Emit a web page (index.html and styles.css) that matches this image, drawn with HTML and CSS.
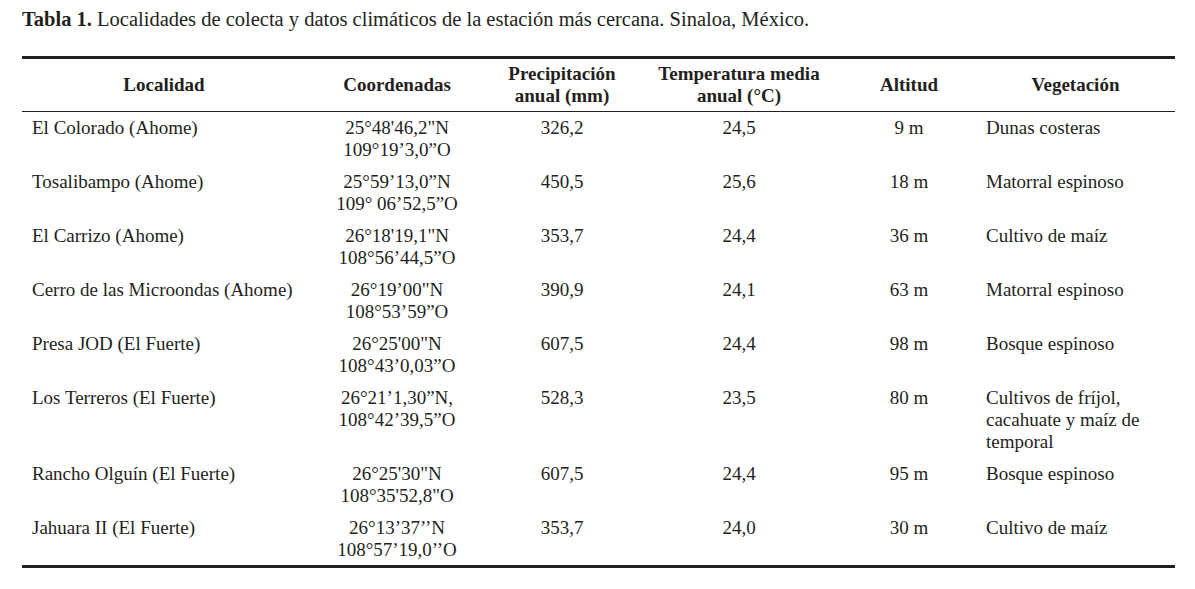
FILE: index.html
```html
<!DOCTYPE html>
<html lang="es">
<head>
<meta charset="utf-8">
<title>Tabla 1</title>
<link rel="stylesheet" href="styles.css">
</head>
<body>
<main class="page">
  <p class="caption"><b>Tabla 1.</b> Localidades de colecta y datos climáticos de la estación más cercana. Sinaloa, México.</p>
  <table class="data">
    <colgroup>
      <col class="c1"><col class="c2"><col class="c3"><col class="c4"><col class="c5"><col class="c6">
    </colgroup>
    <thead>
      <tr>
        <th>Localidad</th>
        <th>Coordenadas</th>
        <th>Precipitación<br>anual (mm)</th>
        <th>Temperatura media<br>anual (°C)</th>
        <th>Altitud</th>
        <th>Vegetación</th>
      </tr>
    </thead>
    <tbody>
      <tr>
        <td class="left">El Colorado (Ahome)</td>
        <td>25°48'46,2"N<br>109°19’3,0”O</td>
        <td>326,2</td>
        <td>24,5</td>
        <td>9 m</td>
        <td class="left">Dunas costeras</td>
      </tr>
      <tr>
        <td class="left">Tosalibampo (Ahome)</td>
        <td>25°59’13,0”N<br>109° 06’52,5”O</td>
        <td>450,5</td>
        <td>25,6</td>
        <td>18 m</td>
        <td class="left">Matorral espinoso</td>
      </tr>
      <tr>
        <td class="left">El Carrizo (Ahome)</td>
        <td>26°18'19,1"N<br>108°56’44,5”O</td>
        <td>353,7</td>
        <td>24,4</td>
        <td>36 m</td>
        <td class="left">Cultivo de maíz</td>
      </tr>
      <tr>
        <td class="left">Cerro de las Microondas (Ahome)</td>
        <td>26°19’00"N<br>108°53’59”O</td>
        <td>390,9</td>
        <td>24,1</td>
        <td>63 m</td>
        <td class="left">Matorral espinoso</td>
      </tr>
      <tr>
        <td class="left">Presa JOD (El Fuerte)</td>
        <td>26°25'00"N<br>108°43’0,03”O</td>
        <td>607,5</td>
        <td>24,4</td>
        <td>98 m</td>
        <td class="left">Bosque espinoso</td>
      </tr>
      <tr>
        <td class="left">Los Terreros (El Fuerte)</td>
        <td>26°21’1,30”N,<br>108°42’39,5”O</td>
        <td>528,3</td>
        <td>23,5</td>
        <td>80 m</td>
        <td class="left">Cultivos de fríjol,<br>cacahuate y maíz de<br>temporal</td>
      </tr>
      <tr>
        <td class="left">Rancho Olguín (El Fuerte)</td>
        <td>26°25'30"N<br>108°35'52,8"O</td>
        <td>607,5</td>
        <td>24,4</td>
        <td>95 m</td>
        <td class="left">Bosque espinoso</td>
      </tr>
      <tr class="last">
        <td class="left">Jahuara II (El Fuerte)</td>
        <td>26°13’37’’N<br>108°57’19,0’’O</td>
        <td>353,7</td>
        <td>24,0</td>
        <td>30 m</td>
        <td class="left">Cultivo de maíz</td>
      </tr>
    </tbody>
  </table>
</main>
</body>
</html>
```
FILE: styles.css
```css
html, body {
  margin: 0;
  padding: 0;
  background: #ffffff;
}

body {
  font-family: "Liberation Serif", "Times New Roman", serif;
  color: #231f20;
  font-size: 19px;
  line-height: 22px;
}

.page {
  padding: 8px 20px 0 22px;
}

.caption {
  margin: 0 0 26px 0;
  font-size: 20.5px;
  line-height: 22px;
  white-space: nowrap;
}

.caption b {
  font-weight: bold;
}

.data {
  width: 1153px;
  border-collapse: collapse;
  table-layout: fixed;
  border-top: 3px solid #231f20;
  border-bottom: 3px solid #231f20;
}

.c1 { width: 284px; }
.c2 { width: 182px; }
.c3 { width: 148px; }
.c4 { width: 206px; }
.c5 { width: 134px; }
.c6 { width: 199px; }

.data th {
  font-weight: bold;
  text-align: center;
  vertical-align: middle;
  padding: 4px 10px;
  border-bottom: 1px solid #231f20;
  white-space: nowrap;
}

.data td {
  text-align: center;
  vertical-align: top;
  padding: 5px 10px;
  white-space: nowrap;
}

.data tr.last td {
  padding-bottom: 4px;
}

.data td.left {
  text-align: left;
}
```
